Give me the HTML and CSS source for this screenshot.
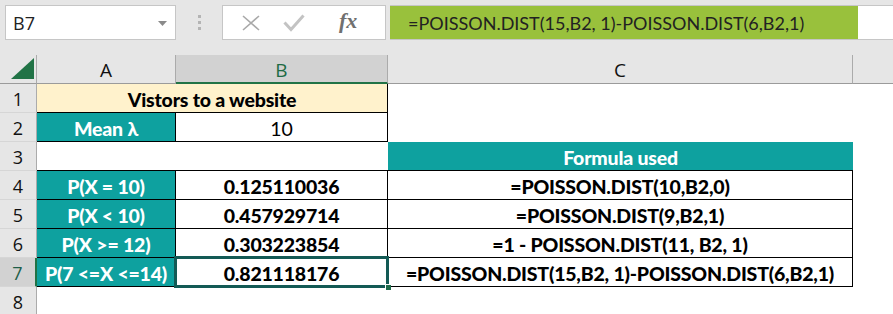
FILE: index.html
```html
<!DOCTYPE html>
<html>
<head>
<meta charset="utf-8">
<link rel="stylesheet" href="styles.css">
</head>
<body>
<div class="toolbar">
  <div class="namebox">
    <span class="name">B7</span>
    <svg class="dd" width="9" height="5" viewBox="0 0 9 5"><path d="M0 0 H9 L4.5 5 Z" fill="#8a8a8a"/></svg>
  </div>
  <div class="grip"><i></i><i></i><i></i></div>
  <div class="fxbox">
    <svg class="ico" width="20" height="18" viewBox="0 0 20 18"><path d="M2 2 L18 16 M18 2 L2 16" stroke="#a9a9a9" stroke-width="1.6" fill="none"/></svg>
    <svg class="ico" width="22" height="18" viewBox="0 0 22 18"><path d="M1.5 8.5 L8 15.5 L20.5 1.5" stroke="#c3c3c3" stroke-width="3" fill="none"/></svg>
    <span class="fx">fx</span>
  </div>
  <div class="formula"><span class="ftext">=POISSON.DIST(15,B2, 1)-POISSON.DIST(6,B2,1)</span></div>
</div>
<div class="sheet">
  <div class="corner"><svg width="23" height="21" viewBox="0 0 23 21"><path d="M0 21 H23 V0 Z" fill="#217346"/></svg></div>
  <div class="ch">A</div>
  <div class="ch sel">B</div>
  <div class="ch">C</div>
  <div class="ch last"></div>

  <div class="rh">1</div>
  <div class="c yellow span2 bb br"><b>Vistors to a website</b></div>
  <div class="c"></div>
  <div class="c"></div>

  <div class="rh">2</div>
  <div class="c teal bb br"><b>Mean λ</b></div>
  <div class="c bb br">10</div>
  <div class="c"></div>
  <div class="c"></div>

  <div class="rh">3</div>
  <div class="c span2 bb"></div>
  <div class="c teal bb"><b>Formula used</b></div>
  <div class="c"></div>

  <div class="rh">4</div>
  <div class="c teal bb br"><b>P(X = 10)</b></div>
  <div class="c bb br"><b>0.125110036</b></div>
  <div class="c bb br"><b>=POISSON.DIST(10,B2,0)</b></div>
  <div class="c"></div>

  <div class="rh">5</div>
  <div class="c teal bb br"><b>P(X &lt; 10)</b></div>
  <div class="c bb br"><b>0.457929714</b></div>
  <div class="c bb br"><b>=POISSON.DIST(9,B2,1)</b></div>
  <div class="c"></div>

  <div class="rh">6</div>
  <div class="c teal bb br"><b>P(X &gt;= 12)</b></div>
  <div class="c bb br"><b>0.303223854</b></div>
  <div class="c bb br"><b>=1 - POISSON.DIST(11, B2, 1)</b></div>
  <div class="c"></div>

  <div class="rh selr">7</div>
  <div class="c teal bb br"><b>P(7 &lt;=X &lt;=14)</b></div>
  <div class="c bb br active"><b>0.821118176</b><span class="selbox"></span><span class="handle"></span></div>
  <div class="c bb br"><b>=POISSON.DIST(15,B2, 1)-POISSON.DIST(6,B2,1)</b></div>
  <div class="c"></div>

  <div class="rh">8</div>
  <div class="c"></div>
  <div class="c"></div>
  <div class="c"></div>
  <div class="c"></div>
</div>
</body>
</html>
```

FILE: styles.css
```css
* { box-sizing: border-box; }
html, body { margin: 0; padding: 0; }
body {
  width: 893px;
  height: 314px;
  overflow: hidden;
  background: #fff;
  font-family: "Lato", "Open Sans", sans-serif;
}
.toolbar {
  height: 55px;
  background: #e6e6e6;
  display: flex;
  align-items: flex-start;
  padding: 5px 0 0 5px;
}
.namebox {
  width: 171px;
  height: 35px;
  background: #fff;
  border: 1px solid #c6c6c6;
  display: flex;
  align-items: center;
  justify-content: space-between;
  padding: 0 8px 0 7px;
}
.name {
  font-family: "Open Sans", sans-serif;
  font-size: 18px;
  color: #222;
}
.dd { margin-top: 1px; }
.grip {
  width: 46px;
  height: 35px;
  display: flex;
  flex-direction: column;
  align-items: center;
  justify-content: center;
  gap: 3px;
}
.grip i {
  display: block;
  width: 3px;
  height: 3px;
  background: #b4b4b4;
}
.fxbox {
  width: 164px;
  height: 35px;
  background: #fff;
  border: 1px solid #c6c6c6;
  display: flex;
  align-items: center;
  padding-left: 18px;
  gap: 22px;
}
.fx {
  font-family: "Liberation Serif", serif;
  font-style: italic;
  font-weight: 700;
  font-size: 22px;
  color: #707070;
  margin-left: 12px;
  margin-top: -3px;
}
.formula {
  flex: 1;
  margin-left: 4px;
  height: 35px;
  background: #fff;
  border-top: 1px solid #c6c6c6;
  border-bottom: 1px solid #c6c6c6;
  display: flex;
}
.ftext {
  width: 468px;
  background: #99c13c;
  font-size: 18px;
  color: #222;
  padding-left: 18px;
  display: flex;
  align-items: center;
  white-space: nowrap;
}
.sheet {
  display: grid;
  grid-template-columns: 37px 139px 212px 465px 1fr;
  grid-auto-rows: 29px;
}
.corner {
  background: #e6e6e6;
  border-right: 1px solid #ababab;
  border-bottom: 1px solid #9b9b9b;
  display: flex;
  align-items: flex-end;
  justify-content: flex-end;
  padding: 0 2px 4px 0;
}
.ch {
  background: #e6e6e6;
  border-right: 1px solid #ababab;
  border-bottom: 1px solid #9b9b9b;
  display: flex;
  align-items: center;
  justify-content: center;
  font-family: "Open Sans", sans-serif;
  font-size: 19px;
  color: #111;
  padding-top: 2px;
}
.ch.sel {
  background: #d2d2d2;
  color: #1e6b45;
  border-bottom: 2px solid #217346;
}
.ch.last { border-right: none; }
.rh {
  background: #e6e6e6;
  border-right: 1px solid #ababab;
  border-bottom: 1px solid #d6d6d6;
  display: flex;
  align-items: center;
  justify-content: center;
  font-family: "Open Sans", sans-serif;
  font-size: 18px;
  color: #111;
  padding-top: 2px;
}
.rh.selr {
  background: #d2d2d2;
  border-right: 2px solid #217346;
  color: #1e5e48;
}
.c {
  display: flex;
  align-items: center;
  justify-content: center;
  font-size: 19.5px;
  color: #000;
  white-space: nowrap;
  padding-top: 2px;
}
.c b { font-weight: 900; letter-spacing: -0.2px; }
.span2 { grid-column: span 2; }
.yellow { background: #fff2cc; }
.teal { background: #0ea19f; color: #fff; }
.bb { border-bottom: 1px solid #000; }
.br { border-right: 1px solid #000; }
.active { position: relative; }
.selbox {
  position: absolute;
  left: -2px;
  top: -2px;
  right: -2px;
  bottom: -2px;
  border: 3px solid #135a55;
}
.handle {
  position: absolute;
  right: -4px;
  bottom: -4px;
  width: 6px;
  height: 6px;
  background: #1e6b4a;
  border: 1px solid #fff;
  border-right: none;
  border-bottom: none;
}
```
